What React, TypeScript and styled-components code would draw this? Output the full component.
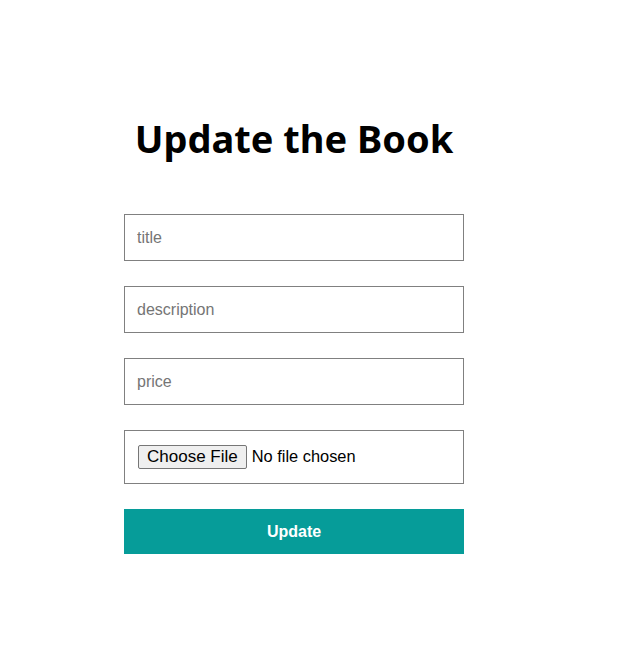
import styled, { createGlobalStyle } from "styled-components";

const GlobalStyle = createGlobalStyle`
  body {
    margin: 0;
    background: #fff;
    font-family: "Liberation Sans", Arial, sans-serif;
  }
`;

export default function App() {
  return (
    <>
      <GlobalStyle />
      <Page>
        <Form>
          <Title>Update the Book</Title>
          <Input type="text" placeholder="title" name="title" />
          <Input type="text" placeholder="description" name="desc" />
          <Input type="number" placeholder="price" name="price" />
          <FileBox>
            <input type="file" />
          </FileBox>
          <Button type="button">Update</Button>
        </Form>
      </Page>
    </>
  );
}

const Page = styled.div`
  padding: 111px 0 0 124px;
`;

const Form = styled.form`
  width: 340px;
  display: flex;
  flex-direction: column;
  gap: 25px;
`;

const Title = styled.h1`
  margin: 0 0 24px;
  text-align: center;
  font-family: "Noto Sans", "Open Sans", sans-serif;
  font-size: 38px;
  font-weight: 700;
  line-height: 54px;
  color: #000;
`;

const Input = styled.input`
  box-sizing: border-box;
  height: 47px;
  padding: 0 12px;
  border: 1px solid #808080;
  font-family: "Liberation Sans", Arial, sans-serif;
  font-size: 16px;
  outline: none;

  &::placeholder {
    color: #757575;
  }

  &::-webkit-outer-spin-button,
  &::-webkit-inner-spin-button {
    -webkit-appearance: none;
    margin: 0;
  }
`;

const FileBox = styled.div`
  box-sizing: border-box;
  height: 54px;
  padding: 0 13px;
  border: 1px solid #808080;
  display: flex;
  align-items: center;

  & > input {
    font-family: "Liberation Sans", Arial, sans-serif;
    font-size: 16.4px;
    color: #000;
  }

  & > input::file-selector-button {
    font-family: "Liberation Sans", Arial, sans-serif;
    font-size: 17px;
    padding: 1px 8px;
    margin-right: 5px;
    border: 1px solid #767676;
    border-radius: 2px;
    background: #efefef;
    color: #000;
  }
`;

const Button = styled.button`
  height: 45px;
  border: none;
  background: #069c99;
  color: #fff;
  font-family: "Liberation Sans", Arial, sans-serif;
  font-size: 16px;
  font-weight: 700;
  cursor: pointer;
`;
